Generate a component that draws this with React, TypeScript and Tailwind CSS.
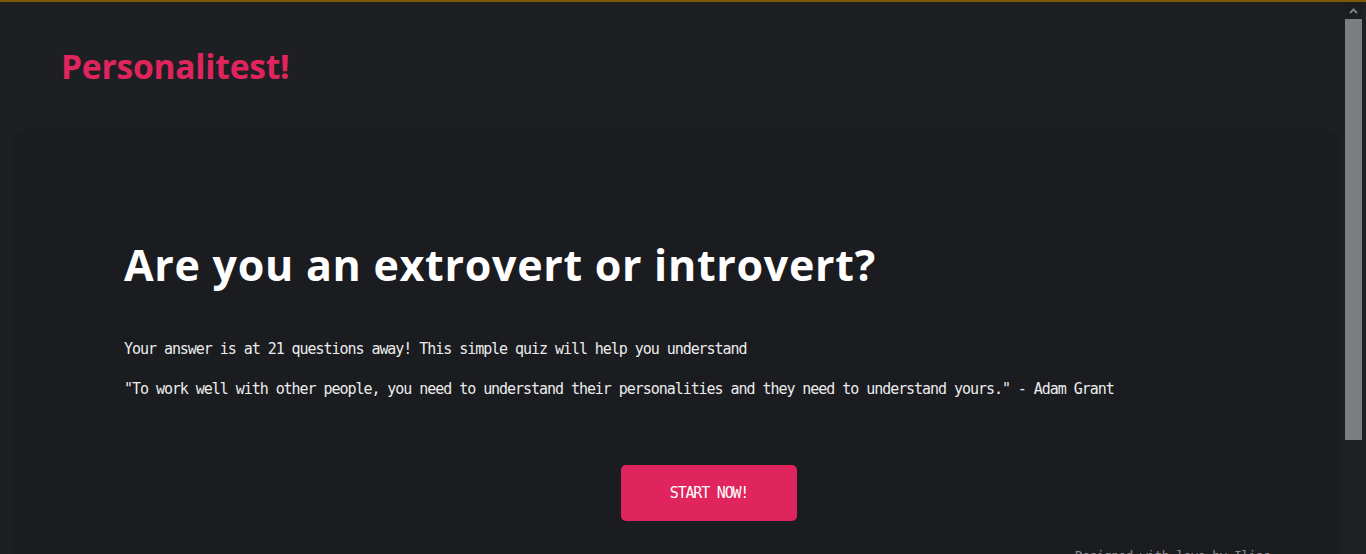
const mono = "font-['DejaVu_Sans_Mono','Liberation_Mono',monospace]";

const Header = () => (
  <header className="h-[127px] pl-[61px] pt-[42px]">
    <h1 className="font-['Open_Sans',sans-serif] text-[33.5px] font-bold leading-[44px] tracking-[-0.2px] text-[#e0245e]">
      Personalitest!
    </h1>
  </header>
);

const Intro = () => (
  <div className="pl-[112px] pr-[46px] pt-[108px]">
    <h2 className="font-['Open_Sans',sans-serif] text-[43px] font-bold leading-[56px] tracking-[0.7px] text-white">
      Are you an extrovert or introvert?
    </h2>
    <div className={`${mono} mt-[47px] text-[15px] leading-[18px] tracking-[-1.05px] text-[#ececec]`}>
      <p>Your answer is at 21 questions away! This simple quiz will help you understand</p>
      <p className="mt-[22px]">
        "To work well with other people, you need to understand their personalities and they need to understand yours." - Adam Grant
      </p>
    </div>
    <div className="mt-[67px] flex justify-center">
      <button
        className={`${mono} h-[56px] w-[176px] rounded-[5px] bg-[#e0245e] text-[15px] tracking-[-1.2px] text-white`}
      >
        START NOW!
      </button>
    </div>
    <p className={`${mono} mt-[25px] pl-[951px] text-[13px] tracking-[-0.6px] text-[#8a8b90]`}>
      Designed with love by Ilias
    </p>
  </div>
);

// page scrollbar as seen in the screenshot
const Scrollbar = () => (
  <aside className="flex w-[21px] flex-shrink-0 flex-col bg-[#1f2024]">
    <div className="flex h-[17px] w-[17px] items-center justify-center bg-[#1c1d21]">
      <svg width="9" height="6" viewBox="0 0 9 6" fill="none">
        <path d="M1 5 L4.5 1.5 L8 5" stroke="#7c7d80" strokeWidth="2" />
      </svg>
    </div>
    <div className="h-[421px] w-[17px] bg-[#7c7d80]" />
  </aside>
);

export default function App() {
  return (
    <div className="flex h-screen flex-col overflow-hidden border-t-2 border-[#7a5a05] bg-[#1e1f23]">
      <div className="flex min-h-0 flex-1">
        <div className="min-w-0 flex-1 overflow-hidden">
          <Header />
          <main className="ml-3 mr-[5px] h-[555px] rounded-[20px] bg-[#1b1c20]">
            <Intro />
          </main>
        </div>
        <Scrollbar />
      </div>
    </div>
  );
}
